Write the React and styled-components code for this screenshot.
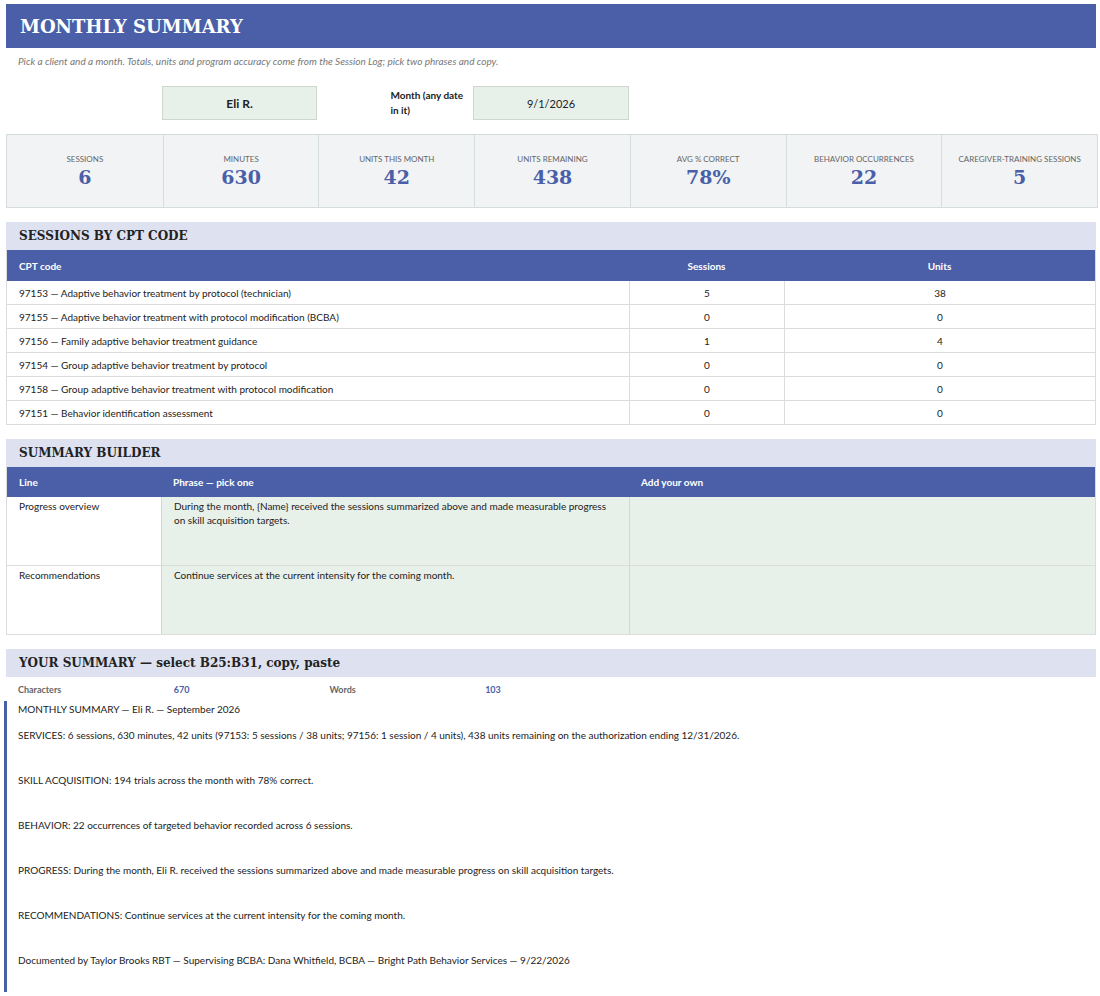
import React from 'react';
import styled, { createGlobalStyle } from 'styled-components';

const Global = createGlobalStyle`
  body { margin: 0; background: #fff; font-family: Lato, "Open Sans", sans-serif; color: #222; }
`;

const serif = `"DejaVu Serif", "Liberation Serif", serif`;

const Page = styled.div`
  padding: 4px 4px 0 6px;
`;

const TitleBar = styled.div`
  background: #4a5fa8;
  color: #fff;
  height: 44px;
  display: flex;
  align-items: center;
  padding-left: 14px;
  font-family: ${serif};
  font-weight: bold;
  font-size: 18px;
`;

const Note = styled.div`
  font-style: italic;
  color: #777;
  font-size: 10px;
  padding: 7px 0 0 12px;
  height: 21px;
`;

const Grid = styled.div`
  display: grid;
  grid-template-columns: repeat(7, 1fr);
  width: 1090px;
`;

const InputRow = styled(Grid)`
  margin-top: 10px;
  height: 34px;
`;

const InputBox = styled.div`
  background: #e8f0ea;
  border: 1px solid #cdd6cf;
  display: flex;
  align-items: center;
  justify-content: center;
  font-size: ${p => (p.$bold ? '12px' : '11px')};
  font-weight: ${p => (p.$bold ? 700 : 400)};
`;

const InputLabel = styled.div`
  font-size: 10px;
  font-weight: 700;
  line-height: 15px;
  padding: 2px 0 0 73px;
  white-space: nowrap;
`;

const Stats = styled(Grid)`
  margin-top: 14px;
  background: #f1f3f5;
  border: 1px solid #d5dcdc;
  height: 72px;
`;

const Stat = styled.div`
  border-left: ${p => (p.$first ? 'none' : '1px solid #d5dcdc')};
  display: flex;
  flex-direction: column;
  align-items: center;
  padding-top: 19px;
`;

const StatLabel = styled.div`
  font-size: 8px;
  color: #666;
  text-transform: uppercase;
`;

const StatValue = styled.div`
  font-family: ${serif};
  font-weight: bold;
  font-size: 19px;
  color: #4a5fa8;
  margin-top: 2px;
`;

const SectionHead = styled.div`
  background: #dde1f0;
  height: 28px;
  margin-top: 14px;
  display: flex;
  align-items: center;
  padding-left: 13px;
  font-family: ${serif};
  font-weight: bold;
  font-size: 12px;
  color: #222;
  width: 1077px;
`;

const Table = styled.div`
  display: grid;
  grid-template-columns: ${p => p.$cols};
  width: 1090px;
  border-left: 1px solid #dcdcdc;
  border-right: 1px solid #dcdcdc;
  box-sizing: border-box;
`;

const Th = styled.div`
  background: #4a5fa8;
  color: #fff;
  font-weight: 700;
  font-size: 10px;
  height: ${p => p.$h || 31}px;
  display: flex;
  align-items: center;
  justify-content: ${p => (p.$center ? 'center' : 'flex-start')};
  padding-left: ${p => (p.$center ? 0 : 12)}px;
`;

const Td = styled.div`
  font-size: 10px;
  height: 23px;
  border-bottom: 1px solid #dcdcdc;
  border-left: ${p => (p.$first ? 'none' : '1px solid #dcdcdc')};
  display: flex;
  align-items: center;
  justify-content: ${p => (p.$center ? 'center' : 'flex-start')};
  padding-left: ${p => (p.$center ? 0 : 12)}px;
`;

const BCell = styled.div`
  font-size: 10px;
  line-height: 14px;
  height: 66px;
  padding: 2px 12px 0;
  border-bottom: 1px solid #dcdcdc;
  border-left: ${p => (p.$first ? 'none' : '1px solid #d0d8d2')};
  background: ${p => (p.$green ? '#e8f0ea' : '#fff')};
`;

const Counts = styled(Grid)`
  height: 24px;
  align-items: center;
  font-size: 9px;
  font-weight: 700;
`;

const CountLabel = styled.div`
  color: #666;
  padding-left: 12px;
`;

const CountValue = styled.div`
  color: #4a5fa8;
  padding-left: 12px;
`;

const SummaryText = styled.div`
  border-left: 3px solid #4a5fa8;
  margin-left: -2px;
  padding: 2px 0 8px 11px;
  font-size: 10px;
`;

const Line = styled.div`
  height: ${p => p.$h || 45}px;
`;

const stats = [
  ['Sessions', '6'], ['Minutes', '630'], ['Units this month', '42'], ['Units remaining', '438'],
  ['Avg % correct', '78%'], ['Behavior occurrences', '22'], ['Caregiver-training sessions', '5'],
];

const cpt = [
  ['97153 — Adaptive behavior treatment by protocol (technician)', 5, 38],
  ['97155 — Adaptive behavior treatment with protocol modification (BCBA)', 0, 0],
  ['97156 — Family adaptive behavior treatment guidance', 1, 4],
  ['97154 — Group adaptive behavior treatment by protocol', 0, 0],
  ['97158 — Group adaptive behavior treatment with protocol modification', 0, 0],
  ['97151 — Behavior identification assessment', 0, 0],
];

const lines = [
  ['MONTHLY SUMMARY — Eli R. — September 2026', 26],
  ['SERVICES: 6 sessions, 630 minutes, 42 units (97153: 5 sessions / 38 units; 97156: 1 session / 4 units), 438 units remaining on the authorization ending 12/31/2026.'],
  ['SKILL ACQUISITION: 194 trials across the month with 78% correct.'],
  ['BEHAVIOR: 22 occurrences of targeted behavior recorded across 6 sessions.'],
  ['PROGRESS: During the month, Eli R. received the sessions summarized above and made measurable progress on skill acquisition targets.'],
  ['RECOMMENDATIONS: Continue services at the current intensity for the coming month.'],
  ['Documented by Taylor Brooks RBT — Supervising BCBA: Dana Whitfield, BCBA — Bright Path Behavior Services — 9/22/2026', 30],
];

export default function App() {
  return (
    <Page>
      <Global />
      <TitleBar>MONTHLY SUMMARY</TitleBar>
      <Note>Pick a client and a month. Totals, units and program accuracy come from the Session Log; pick two phrases and copy.</Note>
      <InputRow>
        <div />
        <InputBox $bold>Eli R.</InputBox>
        <InputLabel>Month (any date<br />in it)</InputLabel>
        <InputBox>9/1/2026</InputBox>
      </InputRow>
      <Stats>
        {stats.map(([l, v], i) => (
          <Stat key={l} $first={i === 0}>
            <StatLabel>{l}</StatLabel>
            <StatValue>{v}</StatValue>
          </Stat>
        ))}
      </Stats>

      <SectionHead>SESSIONS BY CPT CODE</SectionHead>
      <Table $cols="622px 155px 1fr">
        <Th>CPT code</Th>
        <Th $center>Sessions</Th>
        <Th $center>Units</Th>
        {cpt.map(([c, s, u]) => (
          <React.Fragment key={c}>
            <Td $first>{c}</Td>
            <Td $center>{s}</Td>
            <Td $center>{u}</Td>
          </React.Fragment>
        ))}
      </Table>

      <SectionHead>SUMMARY BUILDER</SectionHead>
      <Table $cols="154px 468px 1fr">
        <Th $h={30}>Line</Th>
        <Th $h={30}>Phrase — pick one</Th>
        <Th $h={30}>Add your own</Th>
        <BCell $first>Progress overview</BCell>
        <BCell $green>During the month, {'{Name}'} received the sessions summarized above and made measurable progress on skill acquisition targets.</BCell>
        <BCell $green />
        <BCell $first>Recommendations</BCell>
        <BCell $green>Continue services at the current intensity for the coming month.</BCell>
        <BCell $green />
      </Table>

      <SectionHead>YOUR SUMMARY — select B25:B31, copy, paste</SectionHead>
      <Counts>
        <CountLabel>Characters</CountLabel>
        <CountValue>670</CountValue>
        <CountLabel>Words</CountLabel>
        <CountValue>103</CountValue>
      </Counts>
      <SummaryText>
        {lines.map(([t, h]) => (
          <Line key={t} $h={h}>{t}</Line>
        ))}
      </SummaryText>
    </Page>
  );
}
